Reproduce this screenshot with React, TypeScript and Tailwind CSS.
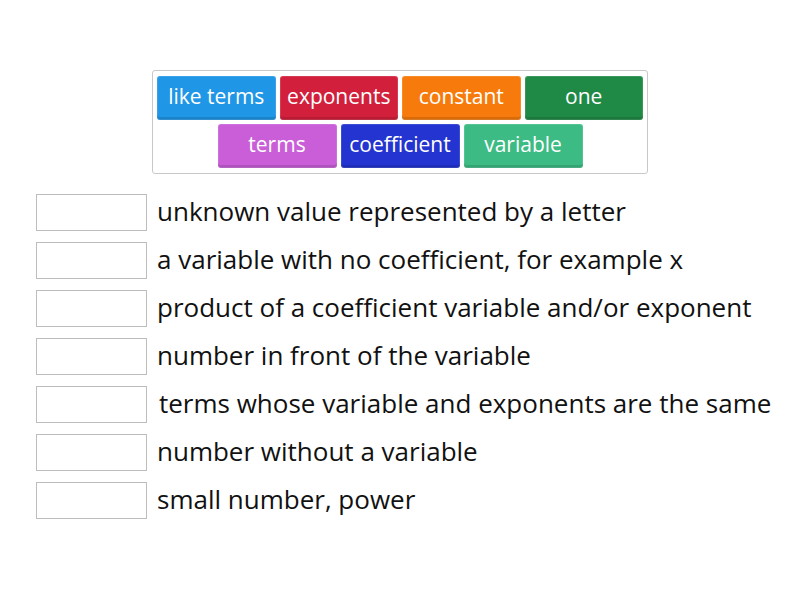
import React from "react";

const tiles1 = [
  { t: "like terms", c: "bg-[#1f96e6]" },
  { t: "exponents", c: "bg-[#d2203c]" },
  { t: "constant", c: "bg-[#f67b0c]" },
  { t: "one", c: "bg-[#1f8a46]" },
];
const tiles2 = [
  { t: "terms", c: "bg-[#c95ed8]" },
  { t: "coefficient", c: "bg-[#2334d0]" },
  { t: "variable", c: "bg-[#3dbb84]" },
];

const rows = [
  "unknown value represented by a letter",
  "a variable with no coefficient, for example x",
  "product of a coefficient variable and/or exponent",
  "number in front of the variable",
  "terms whose variable and exponents are the same",
  "number without a variable",
  "small number, power",
];

function Tile({ t, c }: { t: string; c: string }) {
  return (
    <div
      className={`${c} w-[119px] h-[44px] rounded-[3px] flex items-center justify-center text-white text-[21px] shadow-[inset_0_-3px_0_rgba(0,0,0,0.12),inset_0_0_0_1px_rgba(255,255,255,0.12)] pb-[3px]`}
    >
      {t}
    </div>
  );
}

export default function App() {
  return (
    <div
      className="w-[800px] h-[600px] bg-white relative"
      style={{ fontFamily: '"Open Sans", sans-serif' }}
    >
      <div className="pt-[70px] flex justify-center">
        <div className="w-[496px] h-[104px] border border-[#c8c8c8] rounded-[3px] px-[4px] pt-[5px] flex flex-col gap-[4px]">
          <div className="flex gap-[4px] justify-center">
            {tiles1.map((x) => (
              <Tile key={x.t} {...x} />
            ))}
          </div>
          <div className="flex gap-[4px] justify-center">
            {tiles2.map((x) => (
              <Tile key={x.t} {...x} />
            ))}
          </div>
        </div>
      </div>
      <div className="pl-[36px] pt-[20px] flex flex-col gap-[11px]">
        {rows.map((r, i) => (
          <div key={i} className="flex items-center gap-[10px] h-[37px]">
            <div className="w-[111px] h-[37px] border border-[#bdbdbd] bg-white shrink-0" />
            <div className={`text-[26px] text-[#111] leading-none pb-[3px] ${i === 4 ? "pl-[2px]" : ""}`}>{r}</div>
          </div>
        ))}
      </div>
    </div>
  );
}
